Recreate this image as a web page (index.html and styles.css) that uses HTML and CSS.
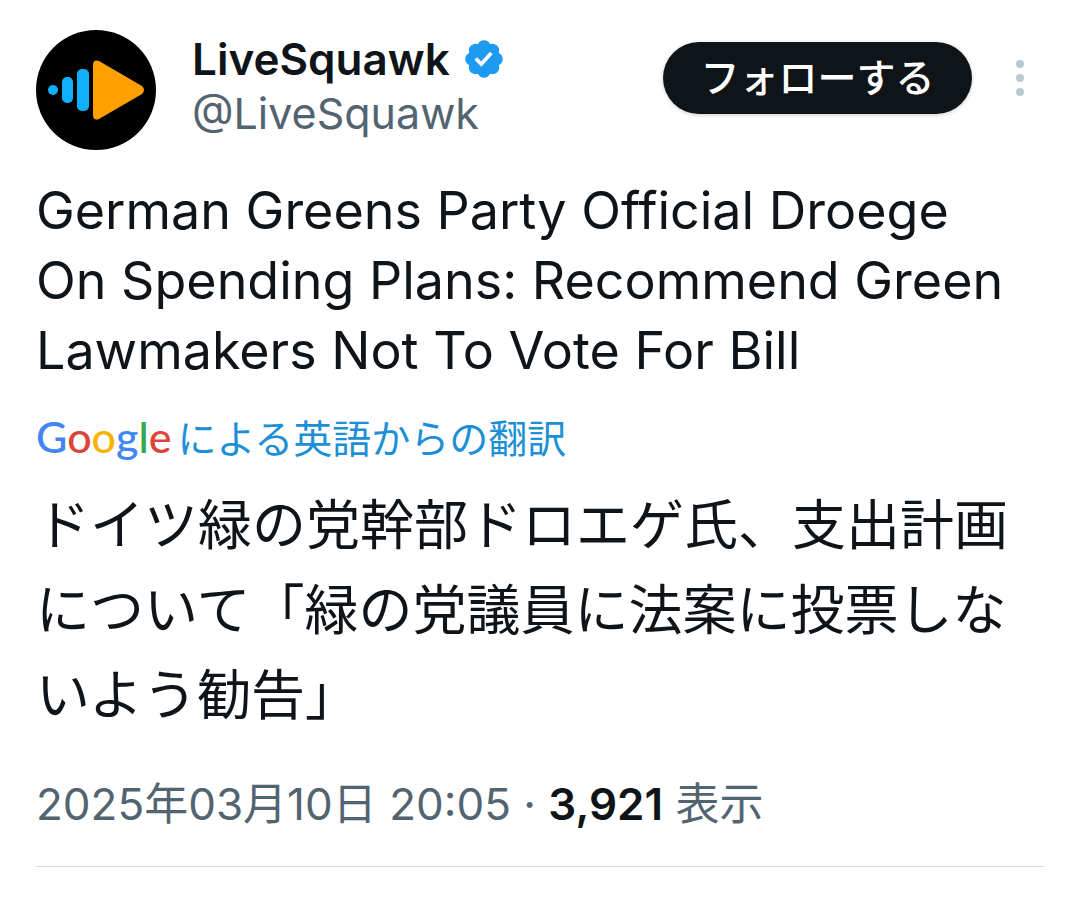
FILE: index.html
```html
<!DOCTYPE html>
<html lang="ja">
<head>
<meta charset="utf-8">
<meta name="viewport" content="width=device-width, initial-scale=1">
<title>LiveSquawk</title>
<link rel="stylesheet" href="styles.css">
</head>
<body>
<article class="post">
  <header class="post-header">
    <svg class="avatar" viewBox="0 0 120 120" role="img" aria-label="LiveSquawk">
      <circle cx="60" cy="60" r="60" fill="#000"/>
      <g fill="#0fb0fa"><circle cx="17" cy="60" r="5"/><rect x="26" y="47" width="11" height="26" rx="5"/><rect x="41" y="39" width="12" height="42" rx="5"/></g>
      <path d="M57 35q0-6 6-4l43 25q4 4 0 8L63 89q-6 2-6-4z" fill="#ffa000"/>
    </svg>
    <div class="identity">
      <div class="name-row">
        <span class="name">LiveSquawk</span>
        <svg class="verified" viewBox="0 0 22 22" role="img" aria-label="認証済み"><path fill="#1d9bf0" d="M20.396 11c-.018-.646-.215-1.275-.57-1.816-.354-.54-.852-.972-1.438-1.246.223-.607.27-1.264.14-1.897-.131-.634-.437-1.218-.882-1.687-.47-.445-1.053-.75-1.687-.882-.633-.13-1.29-.083-1.897.14-.273-.587-.704-1.086-1.245-1.44S11.647 1.62 11 1.604c-.646.017-1.273.213-1.813.568s-.969.854-1.24 1.44c-.608-.223-1.267-.272-1.902-.14-.635.13-1.22.436-1.69.882-.445.47-.749 1.055-.878 1.688-.13.633-.08 1.29.144 1.896-.587.274-1.087.705-1.443 1.245-.356.54-.555 1.17-.574 1.817.02.647.218 1.276.574 1.817.356.54.856.972 1.443 1.245-.224.606-.274 1.263-.144 1.896.13.634.433 1.218.877 1.688.47.443 1.054.747 1.687.878.633.132 1.29.084 1.897-.136.274.586.705 1.084 1.246 1.439.54.354 1.17.551 1.816.569.647-.016 1.276-.213 1.817-.567s.972-.854 1.245-1.44c.604.239 1.266.296 1.903.164.636-.132 1.22-.447 1.68-.907.46-.46.776-1.044.908-1.681s.075-1.299-.165-1.903c.586-.274 1.084-.705 1.439-1.246.354-.54.551-1.17.569-1.816zM9.662 14.85l-3.429-3.428 1.293-1.302 2.072 2.072 4.4-4.794 1.347 1.246z"/></svg>
      </div>
      <span class="handle">@LiveSquawk</span>
    </div>
    <button class="follow" type="button">フォローする</button>
    <button class="more" type="button" aria-label="その他"><svg viewBox="0 0 10 36"><g fill="#b9cad3"><circle cx="5" cy="4" r="4"/><circle cx="5" cy="18" r="4"/><circle cx="5" cy="32" r="4"/></g></svg></button>
  </header>
  <p class="text">German Greens Party Official Droege<br>On Spending Plans: Recommend Green Lawmakers Not To Vote For Bill</p>
  <a class="credit" href="#translation"><span class="google"><span class="b">G</span><span class="r">o</span><span class="y">o</span><span class="b">g</span><span class="g">l</span><span class="r">e</span></span><span>による英語からの翻訳</span></a>
  <p class="translation" id="translation">ドイツ緑の党幹部ドロエゲ氏、支出計画について「緑の党議員に法案に投票しないよう勧告」</p>
  <footer class="meta"><time datetime="2025-03-10T20:05">2025年03月10日 20:05</time> · <strong>3,921</strong> 表示</footer>
</article>
</body>
</html>
```
FILE: styles.css
```css
* { box-sizing: border-box; }
body { margin: 0; background: #fff; color: #0f1419; font-family: Inter, "Noto Sans CJK JP", sans-serif; }
.post { margin: 0 36px; padding-top: 30px; border-bottom: 1px solid #d3dade; }
.post-header { display: flex; align-items: flex-start; }
.avatar { width: 120px; height: 120px; flex: none; margin-right: 36px; }
.identity { flex: 1; display: flex; flex-direction: column; padding-top: 2px; line-height: 54px; }
.name-row { display: flex; align-items: center; gap: 12px; }
.name { font-size: 44px; font-weight: 600; }
.verified { width: 44px; height: 44px; }
.handle { font-size: 43px; color: #536471; }
.follow { margin: 12px 43px 0 0; padding: 0 0 6px; width: 309px; height: 72px; border: 0; border-radius: 36px; background: #0f1419; color: #fff; font: 500 39px "Noto Sans CJK JP", sans-serif; box-shadow: 0 1px 4px #0003; }
.more { margin: 30px 19px 0 0; padding: 0; border: 0; background: none; width: 10px; height: 36px; }
.more svg { display: block; width: 10px; height: 36px; }
.text { margin: 26px 0 0; font-size: 52px; line-height: 70px; }
.credit { display: flex; align-items: center; gap: 6px; margin-top: 22px; height: 56px; color: #1d8fd6; font-size: 39px; text-decoration: none; }
.google { font-family: Lato, sans-serif; font-size: 43px; font-weight: 500; }
.b { color: #4285f4; } .r { color: #db4437; } .y { color: #f4b400; } .g { color: #34a853; }
.translation { margin: 19px 0 0; font-size: 54px; line-height: 85px; }
.meta { margin-top: 36px; padding-bottom: 32px; color: #536471; font-size: 44px; line-height: 60px; }
.meta strong { color: #0f1419; font-weight: 600; }
```
